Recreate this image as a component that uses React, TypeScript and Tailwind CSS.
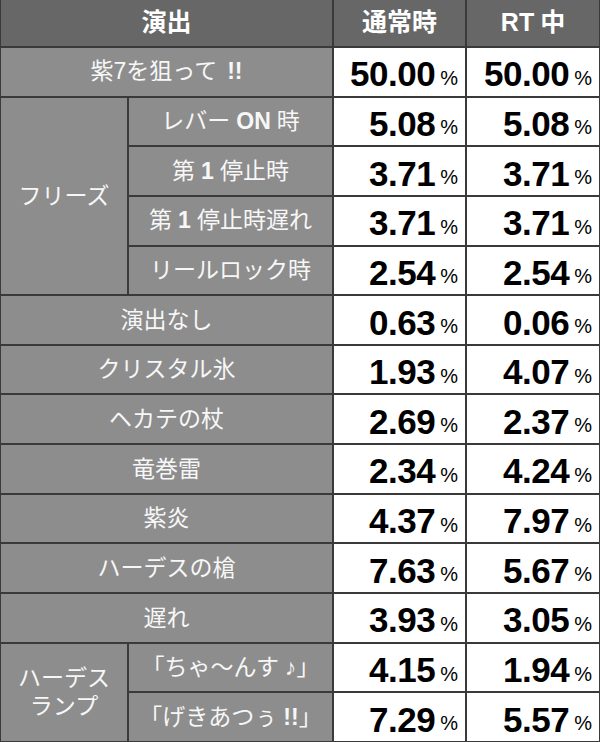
import React from 'react'

type Row = { label: React.ReactNode; normal: string; rt: string }

const freeze: Row[] = [
  { label: <>レバー<b className="font-bold mx-[6px]">ON</b>時</>, normal: '5.08', rt: '5.08' },
  { label: <>第<b className="font-bold mx-[6px]">1</b>停止時</>, normal: '3.71', rt: '3.71' },
  { label: <>第<b className="font-bold mx-[6px]">1</b>停止時遅れ</>, normal: '3.71', rt: '3.71' },
  { label: 'リールロック時', normal: '2.54', rt: '2.54' },
]

const singles: Row[] = [
  { label: '演出なし', normal: '0.63', rt: '0.06' },
  { label: 'クリスタル氷', normal: '1.93', rt: '4.07' },
  { label: 'ヘカテの杖', normal: '2.69', rt: '2.37' },
  { label: '竜巻雷', normal: '2.34', rt: '4.24' },
  { label: '紫炎', normal: '4.37', rt: '7.97' },
  { label: 'ハーデスの槍', normal: '7.63', rt: '5.67' },
  { label: '遅れ', normal: '3.93', rt: '3.05' },
]

const lamp: Row[] = [
  { label: <>「ちゃ〜んす<span className="ml-[6px]">♪</span>」</>, normal: '4.15', rt: '1.94' },
  { label: <>「げきあつぅ<b className="font-bold ml-[6px]">!!</b>」</>, normal: '7.29', rt: '5.57' },
]

const Gray: React.FC<{ className?: string; children: React.ReactNode }> = ({ className = '', children }) => (
  <div className={`bg-[#8d8d8d] text-[#f7f7f7] text-[23px] flex items-center justify-center text-center leading-[1.25] ${className}`}>
    <span>{children}</span>
  </div>
)

const Val: React.FC<{ v: string }> = ({ v }) => (
  <div className="bg-white flex items-center justify-end pr-[7px] pt-[4px] text-black">
    <span className="text-[35px] font-bold tracking-[-0.5px] leading-none">{v}</span>
    <span className="text-[20px] leading-none ml-[5px] mt-[8px]">%</span>
  </div>
)

export default function App() {
  return (
    <div
      className="w-[600px] h-[742px] grid grid-cols-[126px_203px_131px_132px] grid-rows-[46px_repeat(14,1fr)] gap-[2px] bg-[#3a3a3a] px-px pb-px"
      style={{ fontFamily: '"Liberation Sans", "Noto Sans CJK JP", sans-serif' }}
    >
      {/* Header */}
      <div className="col-span-2 bg-[#676767] text-white text-[25px] font-bold flex items-center justify-center">演出</div>
      <div className="bg-[#676767] text-white text-[25px] font-bold flex items-center justify-center">通常時</div>
      <div className="bg-[#676767] text-white text-[25px] font-bold flex items-center justify-center">
        <span>RT<span className="ml-[6px]">中</span></span>
      </div>

      <Gray className="col-span-2">
        紫7を狙って<b className="font-bold ml-[10px]">!!</b>
      </Gray>
      <Val v="50.00" />
      <Val v="50.00" />

      <Gray className="row-span-4">フリーズ</Gray>
      {freeze.map((r, i) => (
        <React.Fragment key={i}>
          <Gray>{r.label}</Gray>
          <Val v={r.normal} />
          <Val v={r.rt} />
        </React.Fragment>
      ))}

      {singles.map((r, i) => (
        <React.Fragment key={i}>
          <Gray className="col-span-2">{r.label}</Gray>
          <Val v={r.normal} />
          <Val v={r.rt} />
        </React.Fragment>
      ))}

      <Gray className="row-span-2">
        ハーデス
        <br />
        ランプ
      </Gray>
      {lamp.map((r, i) => (
        <React.Fragment key={i}>
          <Gray>{r.label}</Gray>
          <Val v={r.normal} />
          <Val v={r.rt} />
        </React.Fragment>
      ))}
    </div>
  )
}
